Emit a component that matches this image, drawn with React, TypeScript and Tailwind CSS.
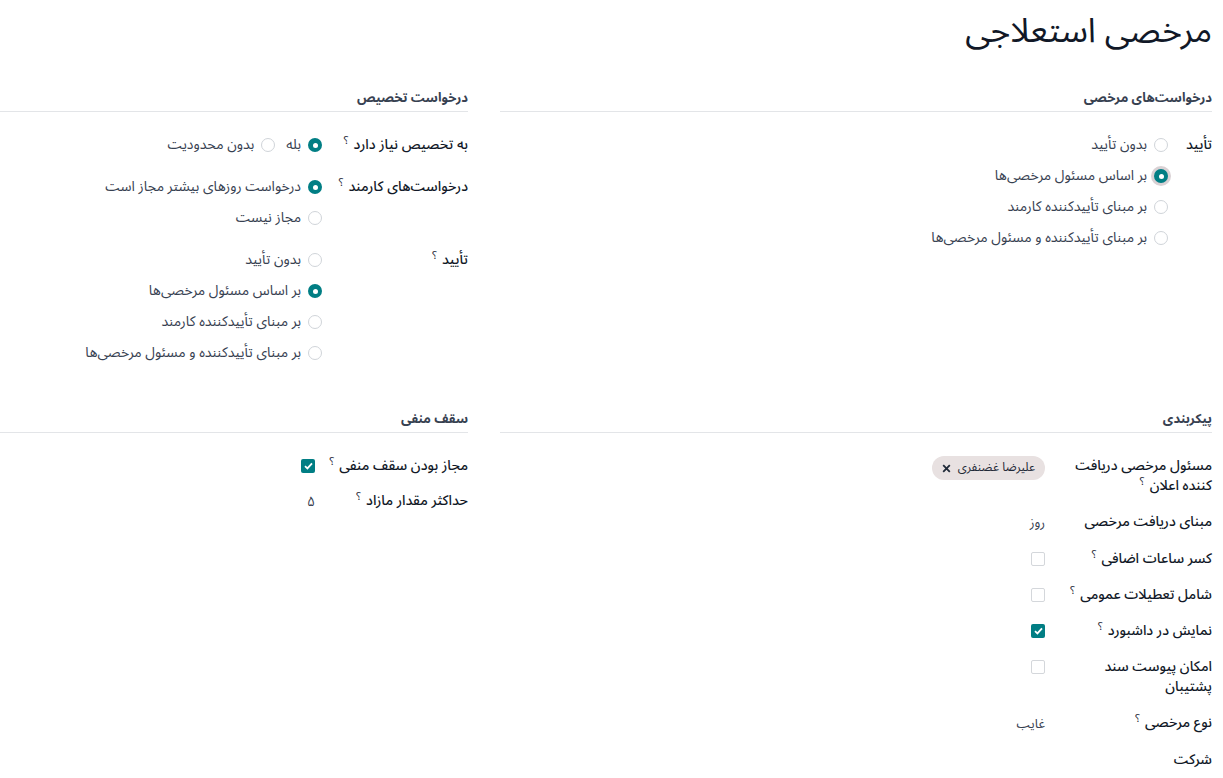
import React from "react";

const TEAL = "bg-[#017e84]";

function Help() {
    return <sup className="mr-[5px] text-[11px] font-normal text-[#1f2937] top-[-0.45em]">؟</sup>;
}

function Radio({ label, checked = false, focus = false }: { label: string; checked?: boolean; focus?: boolean }) {
    return (
        <div className="flex items-center gap-[7px] h-5">
            {checked ? (
                <span
                    className={`w-[14px] h-[14px] rounded-full ${TEAL} flex items-center justify-center shrink-0 ${focus ? "shadow-[0_0_0_3px_#d9d1d4]" : ""}`}
                >
                    <span className="w-[5px] h-[5px] rounded-full bg-white" />
                </span>
            ) : (
                <span className="w-[14px] h-[14px] rounded-full border border-[#d0d4d9] bg-white shrink-0" />
            )}
            <span className="text-[#374151] text-[14px] whitespace-nowrap">{label}</span>
        </div>
    );
}

function Check({ checked = false }: { checked?: boolean }) {
    if (checked) {
        return (
            <span className="w-[14px] h-[14px] rounded-[2px] bg-[#017e84] flex items-center justify-center mt-[3px]">
                <svg width="9" height="8" viewBox="0 0 9 8" fill="none">
                    <path d="M1 4.2 L3.4 6.4 L8 1.4" stroke="white" strokeWidth="1.8" />
                </svg>
            </span>
        );
    }
    return <span className="block w-[14px] h-[14px] rounded-[2px] border border-[#d4d7db] bg-white mt-[3px]" />;
}

function Row({ label, help = false, labelW, children }: { label: React.ReactNode; help?: boolean; labelW: string; children?: React.ReactNode }) {
    return (
        <div className="flex items-start">
            <div className={`${labelW} shrink-0 font-medium text-[#111827] text-[14px] leading-5`}>
                {label}
                {help && <Help />}
            </div>
            <div className="flex-1 leading-5">{children}</div>
        </div>
    );
}

function SectionHead({ title }: { title: string }) {
    return (
        <div className="border-b border-[#e3e5e8] pb-[3px] text-[13px] font-bold text-[#374151] leading-5">{title}</div>
    );
}

function RadioList({ children }: { children: React.ReactNode }) {
    return <div className="flex flex-col gap-[11px] pb-[6px]">{children}</div>;
}

export default function App() {
    return (
        <div
            dir="rtl"
            className="min-h-screen bg-white pr-[11px] overflow-hidden"
            style={{ fontFamily: '"Noto Sans Arabic", "Noto Sans", "DejaVu Sans", sans-serif' }}
        >
            <h1 className="pt-[8px] text-[34px] leading-[46px] text-[#111827] font-normal">مرخصی استعلاجی</h1>

            <div className="grid grid-cols-[712px_468px] gap-x-8 mt-[34px]">
                {/* درخواست‌های مرخصی */}
                <div>
                    <SectionHead title="درخواست‌های مرخصی" />
                    <div className="pt-[23px] flex flex-col gap-4">
                        <Row label="تأیید" labelW="w-[44px]">
                            <RadioList>
                                <Radio label="بدون تأیید" />
                                <Radio label="بر اساس مسئول مرخصی‌ها" checked focus />
                                <Radio label="بر مبنای تأییدکننده کارمند" />
                                <Radio label="بر مبنای تأییدکننده و مسئول مرخصی‌ها" />
                            </RadioList>
                        </Row>
                    </div>
                </div>

                {/* درخواست تخصیص */}
                <div>
                    <SectionHead title="درخواست تخصیص" />
                    <div className="pt-[23px] flex flex-col gap-4">
                        <Row label="به تخصیص نیاز دارد" help labelW="w-[146px] whitespace-nowrap">
                            <div className="flex gap-[11px] pb-[6px]">
                                <Radio label="بله" checked />
                                <Radio label="بدون محدودیت" />
                            </div>
                        </Row>
                        <Row label="درخواست‌های کارمند" help labelW="w-[146px] whitespace-nowrap">
                            <RadioList>
                                <Radio label="درخواست روزهای بیشتر مجاز است" checked />
                                <Radio label="مجاز نیست" />
                            </RadioList>
                        </Row>
                        <Row label="تأیید" help labelW="w-[146px] whitespace-nowrap">
                            <RadioList>
                                <Radio label="بدون تأیید" />
                                <Radio label="بر اساس مسئول مرخصی‌ها" checked />
                                <Radio label="بر مبنای تأییدکننده کارمند" />
                                <Radio label="بر مبنای تأییدکننده و مسئول مرخصی‌ها" />
                            </RadioList>
                        </Row>
                    </div>
                </div>
            </div>

            <div className="grid grid-cols-[712px_468px] gap-x-8 mt-[40px]">
                {/* پیکربندی */}
                <div>
                    <SectionHead title="پیکربندی" />
                    <div className="pt-[23px] flex flex-col gap-4 pb-6">
                        <Row
                            labelW="w-[167px]"
                            label={
                                <span className="block">
                                    <span className="block whitespace-nowrap">مسئول مرخصی دریافت</span>
                                    <span className="block whitespace-nowrap">
                                        کننده اعلان
                                        <Help />
                                    </span>
                                </span>
                            }
                        >
                            <span className="inline-flex items-center gap-[7px] h-6 px-[10px] rounded-full bg-[#e8e1e1] text-[12px] text-[#1f2937]">
                                علیرضا غضنفری
                                <svg width="9" height="9" viewBox="0 0 9 9">
                                    <path d="M1.2 1.2 L7.8 7.8 M7.8 1.2 L1.2 7.8" stroke="#1f2937" strokeWidth="1.8" />
                                </svg>
                            </span>
                        </Row>
                        <Row label="مبنای دریافت مرخصی" labelW="w-[167px] whitespace-nowrap">
                            <span className="text-[13px] text-[#374151]">روز</span>
                        </Row>
                        <Row label="کسر ساعات اضافی" help labelW="w-[167px] whitespace-nowrap">
                            <Check />
                        </Row>
                        <Row label="شامل تعطیلات عمومی" help labelW="w-[167px] whitespace-nowrap">
                            <Check />
                        </Row>
                        <Row label="نمایش در داشبورد" help labelW="w-[167px] whitespace-nowrap">
                            <Check checked />
                        </Row>
                        <Row
                            label={
                                <span className="block">
                                    <span className="block whitespace-nowrap">امکان پیوست سند</span>
                                    <span className="block whitespace-nowrap">پشتیبان</span>
                                </span>
                            }
                            labelW="w-[167px]"
                        >
                            <Check />
                        </Row>
                        <Row label="نوع مرخصی" help labelW="w-[167px] whitespace-nowrap">
                            <span className="text-[13px] text-[#374151]">غایب</span>
                        </Row>
                        <Row label="شرکت" labelW="w-[167px]" />
                    </div>
                </div>

                {/* سقف منفی */}
                <div>
                    <SectionHead title="سقف منفی" />
                    <div className="pt-[23px] flex flex-col gap-[15px]">
                        <Row label="مجاز بودن سقف منفی" help labelW="w-[153px] whitespace-nowrap">
                            <Check checked />
                        </Row>
                        <Row label="حداکثر مقدار مازاد" help labelW="w-[153px] whitespace-nowrap">
                            <span className="text-[14px] text-[#374151]">۵</span>
                        </Row>
                    </div>
                </div>
            </div>
        </div>
    );
}
